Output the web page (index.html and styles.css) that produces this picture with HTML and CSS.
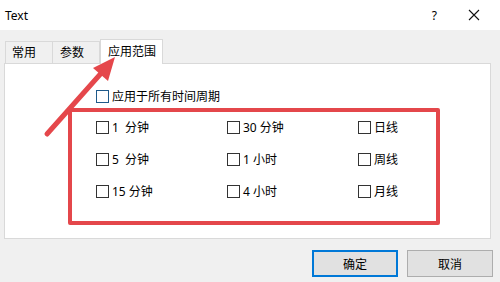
FILE: index.html
```html
<!DOCTYPE html>
<html>
<head>
<meta charset="utf-8">
<link rel="stylesheet" href="styles.css">
</head>
<body>
<div class="win">
  <div class="titlebar">
    <span class="title">Text</span>
    <span class="help">?</span>
    <svg class="close" width="12" height="12" viewBox="0 0 12 12"><path d="M1 1L11 11M11 1L1 11" stroke="#111" stroke-width="1.1" fill="none"/></svg>
  </div>
  <div class="tabs">
    <div class="tab t1">常用</div>
    <div class="tab t2">参数</div>
    <div class="tab t3 sel">应用范围</div>
  </div>
  <div class="panel">
    <label class="cb all"><span class="box blue"></span><span>应用于所有时间周期</span></label>
    <div class="redbox">
      <div class="grid">
        <label class="cb"><span class="box"></span><span>1&nbsp;&nbsp;分钟</span></label>
        <label class="cb"><span class="box"></span><span>30 分钟</span></label>
        <label class="cb"><span class="box"></span><span>日线</span></label>
        <label class="cb"><span class="box"></span><span>5&nbsp;&nbsp;分钟</span></label>
        <label class="cb"><span class="box"></span><span>1 小时</span></label>
        <label class="cb"><span class="box"></span><span>周线</span></label>
        <label class="cb"><span class="box"></span><span>15 分钟</span></label>
        <label class="cb"><span class="box"></span><span>4 小时</span></label>
        <label class="cb"><span class="box"></span><span>月线</span></label>
      </div>
    </div>
  </div>
  <div class="buttons">
    <div class="btn ok">确定</div>
    <div class="btn">取消</div>
  </div>
  <svg class="arrow" width="500" height="282" viewBox="0 0 500 282">
    <line x1="47" y1="134" x2="104" y2="70" stroke="#e5474b" stroke-width="5" stroke-linecap="round"/>
    <polygon points="115,57 108,81 93,68" fill="#e5474b"/>
  </svg>
</div>
</body>
</html>
```
FILE: styles.css
```css
html, body {
  margin: 0;
  padding: 0;
}
body {
  width: 500px;
  height: 282px;
  overflow: hidden;
  background: #f0f0f0;
  font-family: "Noto Sans", "Noto Sans CJK SC", sans-serif;
  font-size: 12px;
  color: #000;
}
.win {
  position: relative;
  width: 500px;
  height: 282px;
}
.titlebar {
  height: 30px;
  background: #fff;
  display: flex;
  align-items: center;
}
.title {
  margin-left: 5px;
  font-size: 12px;
}
.help {
  margin-left: auto;
  margin-right: 31px;
  font-size: 12px;
}
.close {
  margin-right: 20px;
}
.tabs {
  display: flex;
  align-items: flex-end;
  margin-top: 9px;
  padding-left: 5px;
  height: 24px;
  position: relative;
  z-index: 2;
}
.tab {
  box-sizing: border-box;
  height: 22px;
  border: 1px solid #d9d9d9;
  border-bottom: none;
  background: #f0f0f0;
  padding-left: 6px;
  line-height: 20px;
  font-family: "Noto Sans CJK SC", sans-serif;
}
.t1 { width: 48px; }
.t2 { width: 47px; border-left: none; padding-left: 7px; }
.t3 { width: 63px; }
.tab.sel {
  height: 25px;
  background: #fff;
  margin-bottom: -1px;
  padding-left: 7px;
  line-height: 22px;
}
.panel {
  box-sizing: border-box;
  margin-left: 4px;
  width: 487px;
  height: 176px;
  background: #fff;
  border: 1px solid #d9d9d9;
  padding-top: 24px;
  display: flex;
  flex-direction: column;
  position: relative;
  z-index: 1;
}
.cb {
  display: flex;
  align-items: center;
  height: 16px;
  font-family: "Noto Sans", "Noto Sans CJK SC", sans-serif;
  font-size: 12px;
  white-space: pre;
}
.box {
  box-sizing: border-box;
  width: 13px;
  height: 13px;
  border: 1px solid #333;
  background: #fff;
  margin-right: 3px;
  flex: none;
}
.box.blue {
  border-color: #1f5a8a;
}
.all {
  margin-left: 91px;
}
.redbox {
  box-sizing: border-box;
  margin-left: 63px;
  margin-top: 4px;
  width: 372px;
  height: 117px;
  border: 4px solid #e4474b;
  border-radius: 2px;
  padding: 7px 0 0 24px;
}
.grid {
  display: grid;
  grid-template-columns: 131px 131px 60px;
  row-gap: 16px;
}
.buttons {
  display: flex;
  justify-content: flex-end;
  gap: 9px;
  margin-top: 11px;
  margin-right: 7px;
}
.btn {
  box-sizing: border-box;
  width: 86px;
  height: 27px;
  border: 1px solid #adadad;
  background: #e1e1e1;
  display: flex;
  align-items: center;
  justify-content: center;
  font-family: "Noto Sans CJK SC", sans-serif;
}
.btn.ok {
  border: 2px solid #0078d7;
}
.arrow {
  position: absolute;
  left: 0;
  top: 0;
  z-index: 5;
  pointer-events: none;
}
```
